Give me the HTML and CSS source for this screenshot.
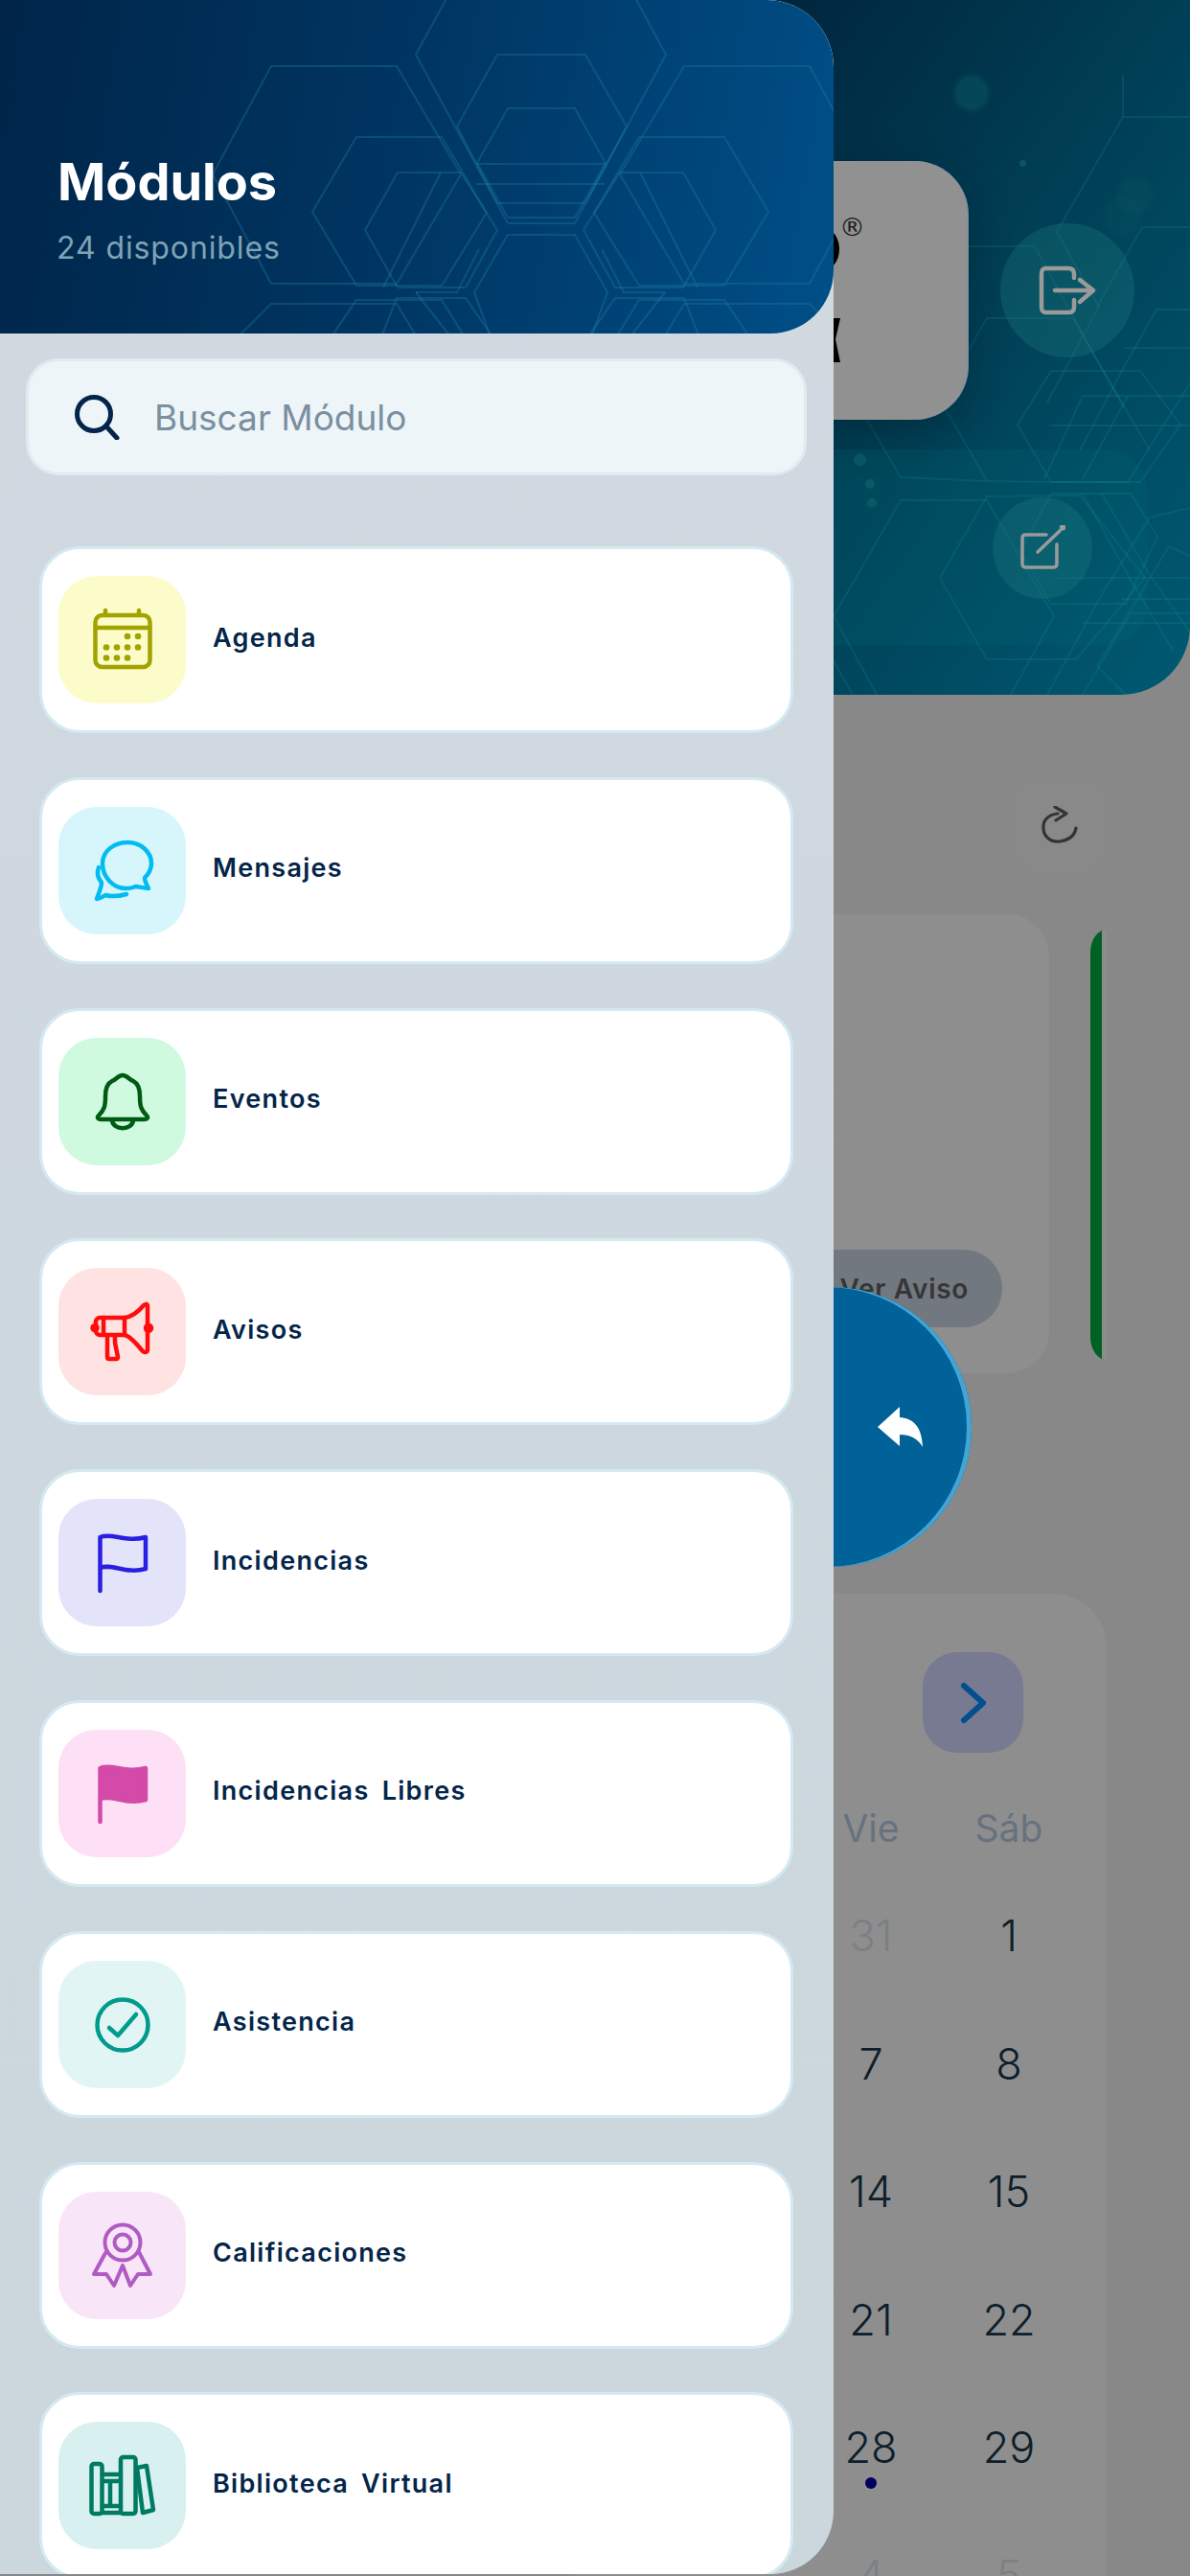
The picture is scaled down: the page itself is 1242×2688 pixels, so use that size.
FILE: index.html
```html
<!DOCTYPE html>
<html lang="es">
<head>
<meta charset="utf-8">
<title>Módulos</title>
<link rel="stylesheet" href="styles.css">
</head>
<body>
<div class="app">
  <div class="backdrop">
    <section class="hero">
      <span class="hero-band"></span>
      <svg class="hero-lines" viewBox="0 0 1242 725" fill="none" stroke="#14858f" stroke-width="2" stroke-opacity=".24">
        <polyline points="1172,78 1172,122 1242,122"/>
        <polyline points="1172,122 1103,242 1147,320 1093,420"/>
        <polyline points="1010,257 1080,257 1140,367 1200,470"/>
        <polyline points="1242,237 1192,237 1145,320"/>
        <polyline points="1010,367 1030,332 1120,332 1173,425"/>
        <polyline points="1242,323 1207,323 1173,383 1127,470"/>
        <polyline points="1173,363 1242,363"/>
        <polyline points="905,438 940,498 1030,502 1097,503 1177,503 1242,400"/>
        <polyline points="987,427 1030,502"/>
        <polygon points="1097,387 1190,387 1232,443 1190,503 1097,503 1062,443"/>
        <polyline points="1130,413 1242,413"/>
        <polyline points="1097,444 1242,444"/>
        <polyline points="1130,413 1090,500"/>
        <polyline points="1177,413 1130,500"/>
        <polygon points="940,522 1030,522 1100,643 1030,770 940,770 870,643"/>
        <polygon points="1030,518 1127,517 1195,603 1123,688 1030,688 981,603"/>
        <polygon points="1097,515 1180,515 1208,560 1175,630 1097,630 1065,575"/>
        <polyline points="1130,515 1180,605 1225,680"/>
        <polyline points="1150,515 1200,600 1242,660"/>
        <polyline points="1093,725 1150,620 1200,540 1242,530"/>
        <polyline points="1130,725 1180,640 1242,640"/>
        <polyline points="1145,695 1220,570 1242,580"/>
        <polyline points="1100,603 1242,603"/>
        <polyline points="1130,650 1242,650"/>
        <polyline points="1170,625 1242,625"/>
        <polyline points="870,690 890,725"/>
        <polyline points="1145,695 1175,725"/>
      </svg>
      <span class="glow glow-a"></span>
      <span class="glow glow-b"></span>
      <span class="glow glow-c"></span>
      <span class="spark spark-a"></span>
      <span class="spark spark-b"></span>
      <span class="spark spark-c"></span>
      <span class="spark spark-d"></span>
      <div class="logo-card">
        <svg class="logo-marks" viewBox="0 0 40 270" fill="#000">
          <path d="M0 75 C8 84 8 100 0 109 Z"/>
          <path d="M0 164 L7 164 L2 186 L7 210 L0 210 Z"/>
        </svg>
        <span class="logo-reg">®</span>
      </div>
      <div class="hero-actions">
        <button class="round-btn round-exit" aria-label="Salir">
          <svg viewBox="0 0 60 52" width="60" height="52" fill="none" stroke="#9a9a9a" stroke-width="4.5" stroke-linecap="round" stroke-linejoin="round">
            <path d="M37 13 V9 C37 5 35 3 31 3 H8 C4 3 3 5 3 9 V43 C3 47 4 49 8 49 H32 C35 49 37 47 37 43 V36"/>
            <path d="M17 26 H57 M43 15 L57 26 L43 38"/>
          </svg>
        </button>
        <button class="round-btn round-edit" aria-label="Editar">
          <svg viewBox="0 0 48 48" width="48" height="48" fill="none" stroke="#9a9a9a" stroke-width="3.6" stroke-linecap="round" stroke-linejoin="round">
            <path d="M28 10 H7 C4 10 3 11 3 14 V40 C3 43 4 44 7 44 H35 C38 44 39 43 39 40 V20"/>
            <path d="M19 28 L42 6"/>
            <circle cx="45" cy="2.500" r="1.400" fill="#9a9a9a"/>
          </svg>
        </button>
      </div>
    </section>

    <div class="refresh-row">
      <button class="refresh-btn" aria-label="Actualizar">
        <svg viewBox="0 0 40 44" width="40" height="44" fill="none" stroke="#333" stroke-width="3.2" stroke-linecap="round" stroke-linejoin="round">
          <path d="M18 8 C8 9 2 15 3 24 C4 33 11 38 20 37 C29 36 36 31 37 23"/>
          <path d="M15 1 L27 8 L16 15"/>
        </svg>
      </button>
    </div>

    <div class="notice-row">
      <article class="notice-card">
        <span class="notice-pill">Ver Aviso</span>
      </article>
      <span class="notice-bar"></span>
    </div>

    <section class="calendar">
      <div class="calendar-head">
        <button class="next-btn" aria-label="Siguiente">
          <svg viewBox="0 0 28 44" width="28" height="44" fill="none" stroke="#004f8f" stroke-width="6" stroke-linecap="round" stroke-linejoin="round">
            <path d="M4 4 L24 22 L4 40"/>
          </svg>
        </button>
      </div>
      <div class="calendar-week">
        <span>Vie</span><span>Sáb</span>
      </div>
      <div class="calendar-days">
        <span class="day day-out">31</span><span class="day">1</span>
        <span class="day">7</span><span class="day">8</span>
        <span class="day">14</span><span class="day">15</span>
        <span class="day">21</span><span class="day">22</span>
        <span class="day day-dot">28</span><span class="day">29</span>
        <span class="day day-out">4</span><span class="day day-out">5</span>
      </div>
    </section>
  </div>

  <button class="fab" aria-label="Volver">
    <svg viewBox="0 0 47 42" width="47" height="42" fill="#fff">
      <path d="M0 21 L23 0 L23 11 C37 12 46 20 47 42 C42 33 34 29 23 29 L23 41 Z"/>
    </svg>
  </button>

  <aside class="drawer">
    <header class="drawer-head">
      <svg class="drawer-lines" viewBox="0 0 870 348" fill="none" stroke="#1d7fa0" stroke-width="2.2" stroke-opacity=".34">
        <polygon points="530,-119 600,-119 695,57 600,233 530,233 434,57"/>
        <polygon points="519,57 611,57 654,132 611,212 519,212 477,132"/>
        <polygon points="530,113 600,113 632,170 600,227 530,227 498,170"/>
        <polyline points="498,171 632,171"/>
        <polyline points="497,192 631,192"/>
        <polygon points="530,245 600,245 634,305 600,400 530,400 495,305"/>
        <polygon points="283,69 414,69 481,182 414,296 283,296 222,182"/>
        <polygon points="372,143 461,143 508,222 461,298 372,298 326,221"/>
        <polygon points="415,180 481,180 519,240 486,300 415,300 381,240"/>
        <polygon points="714,69 845,69 906,182 845,296 714,296 647,182"/>
        <polygon points="667,143 756,143 802,221 756,298 667,298 620,222"/>
        <polygon points="647,180 713,180 747,240 713,300 642,300 609,240"/>
        <polyline points="240,360 283,317 414,317 440,360"/>
        <polyline points="340,360 372,313 461,313 490,360"/>
        <polyline points="395,360 414,311 486,311 520,360"/>
        <polyline points="888,360 845,317 714,317 688,360"/>
        <polyline points="788,360 756,313 667,313 638,360"/>
        <polyline points="733,360 714,311 642,311 608,360"/>
        <polyline points="434,305 477,305 500,260"/>
        <polyline points="694,305 651,305 628,260"/>
        <polyline points="434,305 477,360"/>
        <polyline points="694,305 651,360"/>
        <polyline points="460,180 400,300"/>
        <polyline points="668,180 728,300"/>
      </svg>
      <h1 class="drawer-title">Módulos</h1>
      <p class="drawer-sub">24 disponibles</p>
    </header>

    <div class="search">
      <svg viewBox="0 0 48 48" width="48" height="48" fill="none" stroke="#04254a" stroke-width="5" stroke-linecap="round">
        <circle cx="21" cy="21" r="17.5"/>
        <path d="M34 34 L45 46"/>
      </svg>
      <span class="search-text">Buscar Módulo</span>
    </div>

    <ul class="module-list">
      <li class="module">
        <span class="module-icon tone-agenda">
          <svg viewBox="0 0 133 133" fill="none" stroke="#a3a300" stroke-width="4.5" stroke-linecap="round">
            <rect x="38.5" y="41" width="57" height="54" rx="7"/>
            <path d="M38.5 54 H95.5 M49 36 V41 M84 36 V41"/>
            <g fill="#a3a300" stroke="none">
              <circle cx="72" cy="63" r="3.3"/><circle cx="83" cy="63" r="3.3"/>
              <circle cx="50" cy="74.500" r="3.3"/><circle cx="61" cy="74.500" r="3.3"/><circle cx="72" cy="74.500" r="3.3"/><circle cx="83" cy="74.500" r="3.3"/>
              <circle cx="50" cy="85.500" r="3.3"/><circle cx="61" cy="85.500" r="3.3"/><circle cx="72" cy="85.500" r="3.3"/>
            </g>
          </svg>
        </span>
        <span class="module-name">Agenda</span>
      </li>
      <li class="module">
        <span class="module-icon tone-mensajes">
          <svg viewBox="0 0 133 133" fill="none" stroke="#00bcf2" stroke-width="4.5" stroke-linecap="round" stroke-linejoin="round">
            <path d="M46 59 C46 46 58 37 72 37 C86 37 97 47 97 59 C97 65 94 70 90 74 C90 78 92 81 94 85 C89 85 84 83 80 83 C77 85 74 85 70 85 C57 85 46 73 46 59 Z"/>
            <path d="M42 63 C40 68 41 74 45 79 C45 84 42 90 40 96 C43 96 46 94 49 92 C56 94 64 93 71 91"/>
          </svg>
        </span>
        <span class="module-name">Mensajes</span>
      </li>
      <li class="module">
        <span class="module-icon tone-eventos">
          <svg viewBox="0 0 133 133" fill="none" stroke="#005c14" stroke-width="4.5" stroke-linecap="round" stroke-linejoin="round">
            <path d="M67 39 C72 39 74 44 78 45 C84 48 85 54 85 61 C85 71 86 75 92 81 C94 83 93 85 90 85 L44 85 C41 85 40 83 42 81 C48 75 49 71 49 61 C49 54 50 48 56 45 C60 44 62 39 67 39 Z"/>
            <path d="M56 86 C57 97 77 97 78 86"/>
          </svg>
        </span>
        <span class="module-name">Eventos</span>
      </li>
      <li class="module">
        <span class="module-icon tone-avisos">
          <svg viewBox="0 0 133 133" fill="none" stroke="#ff0d0d" stroke-width="4.5" stroke-linecap="round" stroke-linejoin="round">
            <path d="M69 52 C77 51 84 45 89 39 C91 37 93 38 93 40 V85 C93 88 90 89 88 87 C83 81 75 71 69 70"/>
            <path d="M69 52 H43 C41 52 39 54 39 56 V66 C39 68 41 70 43 70 H69 Z"/>
            <path d="M47 52 V70"/>
            <path d="M51 71 V93 C51 95 52 95 53 95 H60 C62 95 62 94 62 93 L59 78 V71"/>
            <circle cx="94" cy="62.700" r="3" fill="#ff0d0d"/>
            <circle cx="38" cy="62.700" r="2.500" fill="#ff0d0d"/>
          </svg>
        </span>
        <span class="module-name">Avisos</span>
      </li>
      <li class="module">
        <span class="module-icon tone-incidencias">
          <svg viewBox="0 0 133 133" fill="none" stroke="#2a1fe0" stroke-width="4.5" stroke-linecap="round" stroke-linejoin="round">
            <path d="M43.500 96 V40 C56 35 70 46 91 40 V73 C70 79 56 67 43.500 72"/>
          </svg>
        </span>
        <span class="module-name">Incidencias</span>
      </li>
      <li class="module">
        <span class="module-icon tone-libres">
          <svg viewBox="0 0 133 133" fill="#d44aa8" stroke="#d44aa8" stroke-width="4.5" stroke-linecap="round" stroke-linejoin="round">
            <path d="M43.500 96 V40 C56 35 70 46 91 40 V73 C70 79 56 67 43.500 72 Z"/>
          </svg>
        </span>
        <span class="module-name">Incidencias Libres</span>
      </li>
      <li class="module">
        <span class="module-icon tone-asistencia">
          <svg viewBox="0 0 133 133" fill="none" stroke="#009b8c" stroke-width="4.5" stroke-linecap="round" stroke-linejoin="round">
            <circle cx="67" cy="67" r="26.500"/>
            <path d="M53 70 L62 78 L81 56"/>
          </svg>
        </span>
        <span class="module-name">Asistencia</span>
      </li>
      <li class="module">
        <span class="module-icon tone-calificaciones">
          <svg viewBox="0 0 133 133" fill="none" stroke="#b05bc4" stroke-width="4" stroke-linecap="round" stroke-linejoin="round">
            <circle cx="67" cy="53" r="18.500"/>
            <circle cx="67" cy="53" r="8.500"/>
            <path d="M49 64 L37 86 L50 86 L58 98 L67 77 L75 98 L83 86 L96 86 L84 63"/>
          </svg>
        </span>
        <span class="module-name">Calificaciones</span>
      </li>
      <li class="module">
        <span class="module-icon tone-biblioteca">
          <svg viewBox="0 0 133 133" fill="none" stroke="#007a62" stroke-width="4.5" stroke-linecap="round" stroke-linejoin="round">
            <rect x="34.500" y="44" width="11" height="52" rx="2.500"/>
            <rect x="65" y="37" width="15.500" height="59" rx="2.500"/>
            <path d="M46 55 H65 M46 62 H65 M46 88 H65 M46 95 H65 M54 62 V88"/>
            <path d="M82 48 L92 46 L99 92 L88 95 Z"/>
          </svg>
        </span>
        <span class="module-name">Biblioteca Virtual</span>
      </li>
    </ul>
  </aside>
</div>
</body>
</html>
```

FILE: styles.css
```css
* { box-sizing: border-box; }

html, body { margin: 0; padding: 0; }

body {
  width: 1242px;
  height: 2688px;
  overflow: hidden;
  font-family: Inter, "Liberation Sans", sans-serif;
}

button { border: 0; padding: 0; font: inherit; }

.app {
  position: relative;
  width: 1242px;
  height: 2688px;
  overflow: hidden;
  background: #888888;
}

.backdrop { height: 2688px; overflow: hidden; }

/* hero */
.hero {
  position: relative;
  display: flex;
  height: 725px;
  padding: 168px 0 0 700px;
  overflow: hidden;
  border-radius: 0 0 72px 0;
  background: linear-gradient(125deg, #001a33 0%, #00243d 45%, #003e54 70%, #005a72 100%);
}

.hero-band {
  position: absolute;
  left: 700px;
  top: 469px;
  width: 498px;
  height: 204px;
  border-radius: 0 44px 44px 0;
  background: rgba(0, 120, 130, .14);
}

.hero-lines { position: absolute; left: 0; top: 0; width: 1242px; height: 725px; }

.glow { position: absolute; border-radius: 50%; background: #0a5560; opacity: .55; filter: blur(2px); }
.glow-a { left: 996px; top: 78px; width: 36px; height: 38px; }
.glow-b { left: 1166px; top: 184px; width: 38px; height: 40px; opacity: .3; }
.glow-c { left: 1152px; top: 206px; width: 40px; height: 40px; opacity: .25; }

.spark { position: absolute; width: 10px; height: 10px; border-radius: 50%; background: #0d5f6c; opacity: .7; }
.spark-a { left: 1064px; top: 167px; width: 7px; height: 7px; }
.spark-b { left: 891px; top: 473px; width: 13px; height: 13px; }
.spark-c { left: 903px; top: 500px; }
.spark-d { left: 905px; top: 520px; }

.logo-card {
  position: relative;
  flex: none;
  width: 310px;
  height: 270px;
  border-radius: 0 56px 56px 0;
  background: #919191;
  box-shadow: 1px 0 0 #6f8ea3, 0 14px 40px rgba(0, 20, 30, .35);
}

.logo-marks { position: absolute; left: 170px; top: 0; width: 40px; height: 270px; }

.logo-reg {
  position: absolute;
  left: 176px;
  top: 53px;
  font-family: "DejaVu Sans", sans-serif;
  font-size: 27px;
  line-height: 32px;
  color: #1c1c1c;
}

.hero-actions {
  position: relative;
  display: flex;
  flex-direction: column;
  align-items: flex-start;
  margin-left: 26px;
}

.round-btn {
  display: flex;
  align-items: center;
  justify-content: center;
  border-radius: 50%;
  background: rgba(30, 125, 130, .3);
}

.round-exit { width: 140px; height: 140px; margin: 65px 0 0 8px; }
.round-edit { width: 104px; height: 106px; margin-top: 146px; }

/* refresh */
.refresh-row {
  display: flex;
  justify-content: flex-end;
  padding: 90px 87px 0 0;
}

.refresh-btn {
  display: flex;
  align-items: center;
  justify-content: center;
  width: 98px;
  height: 95px;
  border-radius: 24px;
  background: #898989;
}

/* notices */
.notice-row {
  display: flex;
  align-items: flex-start;
  justify-content: flex-end;
  gap: 43px;
  margin-top: 44px;
  padding-right: 87px;
}

.notice-card {
  display: flex;
  align-items: flex-end;
  justify-content: flex-end;
  width: 500px;
  height: 479px;
  padding: 0 49px 48px 0;
  border-radius: 0 44px 44px 0;
  background: #8e8e8e;
}

.notice-pill {
  display: flex;
  align-items: center;
  height: 81px;
  padding: 0 35px 0 60px;
  border-radius: 0 40px 40px 0;
  background: #72787f;
  color: #363636;
  font-size: 28px;
  font-weight: 600;
  letter-spacing: .7px;
}

.notice-bar {
  flex: none;
  width: 17px;
  height: 449px;
  margin-top: 16px;
  border-right: 5px solid #8c8c8c;
  border-radius: 24px 0 0 24px / 34px 0 0 34px;
  background: #006125;
}

/* calendar */
.calendar {
  width: 555px;
  height: 1100px;
  margin: 230px 87px 0 auto;
  border-radius: 0 56px 0 0;
  background: #8e8e8e;
}

.calendar-head {
  display: flex;
  justify-content: flex-end;
  padding: 61px 87px 0 0;
}

.next-btn {
  display: flex;
  align-items: center;
  justify-content: center;
  width: 105px;
  height: 105px;
  border-radius: 36px;
  background: #777a90;
}

.calendar-week,
.calendar-days {
  display: grid;
  grid-template-columns: 144px 144px;
  justify-content: end;
  padding-right: 30px;
  text-align: center;
}

.calendar-week {
  height: 124px;
  align-items: center;
  padding-top: 32px;
  font-size: 39px;
  color: #66727e;
}

.calendar-days { grid-auto-rows: 133.5px; }

.day {
  position: relative;
  display: flex;
  align-items: center;
  justify-content: center;
  font-size: 45px;
  font-weight: 300;
  color: #0e1e2a;
}

.day-out { color: #7b8084; }

.day-dot::after {
  content: "";
  position: absolute;
  left: 66px;
  top: 98px;
  width: 12px;
  height: 12px;
  border-radius: 50%;
  background: #000060;
}

/* floating button */
.fab {
  position: absolute;
  left: 722px;
  top: 1343px;
  width: 292px;
  height: 292px;
  border-radius: 50%;
  background: #006298;
  box-shadow: inset -5px 0 0 #42a5d5;
}

.fab svg { position: absolute; left: 194px; top: 125px; }

/* drawer */
.drawer {
  position: absolute;
  left: 0;
  top: 0;
  width: 870px;
  height: 2686px;
  overflow: hidden;
  border-radius: 0 70px 66px 0;
  background: linear-gradient(180deg, #d1d9e1 0%, #cbd6dd 100%);
}

.drawer-head {
  position: relative;
  height: 348px;
  padding: 160px 0 0 60px;
  overflow: hidden;
  border-radius: 0 70px 66px 0;
  background: linear-gradient(100deg, #002549 0%, #003663 50%, #004f88 100%);
}

.drawer-lines { position: absolute; left: 0; top: 0; width: 870px; height: 348px; }

.drawer-title {
  position: relative;
  margin: 0;
  font-size: 54px;
  line-height: 60px;
  font-weight: 700;
  color: #ffffff;
}

.drawer-sub {
  position: relative;
  margin: 19px 0 0 -1px;
  font-size: 32px;
  line-height: 40px;
  letter-spacing: .9px;
  color: #7fa3b5;
}

.search {
  display: flex;
  align-items: center;
  gap: 36px;
  height: 122px;
  margin: 26px 28px 0 27px;
  padding-left: 47px;
  border: 3px solid #e2e9ef;
  border-radius: 34px;
  background: #eef5f9;
}

.search-text { font-size: 37px; color: #7a8fa0; }

.module-list {
  display: flex;
  flex-direction: column;
  gap: 45.800px;
  margin: 74px 0 0;
  padding: 0 42px 0 41px;
  list-style: none;
}

.module {
  display: flex;
  flex: none;
  align-items: center;
  gap: 28px;
  height: 195px;
  padding-left: 17px;
  border: 3px solid #d4e9f1;
  border-radius: 42px;
  background: #ffffff;
}

.module-icon {
  flex: none;
  width: 133px;
  height: 133px;
  border-radius: 40px;
}

.module-icon svg { display: block; width: 133px; height: 133px; }

.tone-agenda { background: #fbfcc9; }
.tone-mensajes { background: #d7f6fb; }
.tone-eventos { background: #cffae0; }
.tone-avisos { background: #ffe2e2; }
.tone-incidencias { background: #e3e3fa; }
.tone-libres { background: #fddff6; }
.tone-asistencia { background: #e1f6f4; }
.tone-calificaciones { background: #f8e5f7; }
.tone-biblioteca { background: #d8f1f0; }

.module-name {
  padding-bottom: 5px;
  font-size: 27px;
  font-weight: 600;
  letter-spacing: 1.3px;
  word-spacing: 5px;
  color: #04254a;
}
```
